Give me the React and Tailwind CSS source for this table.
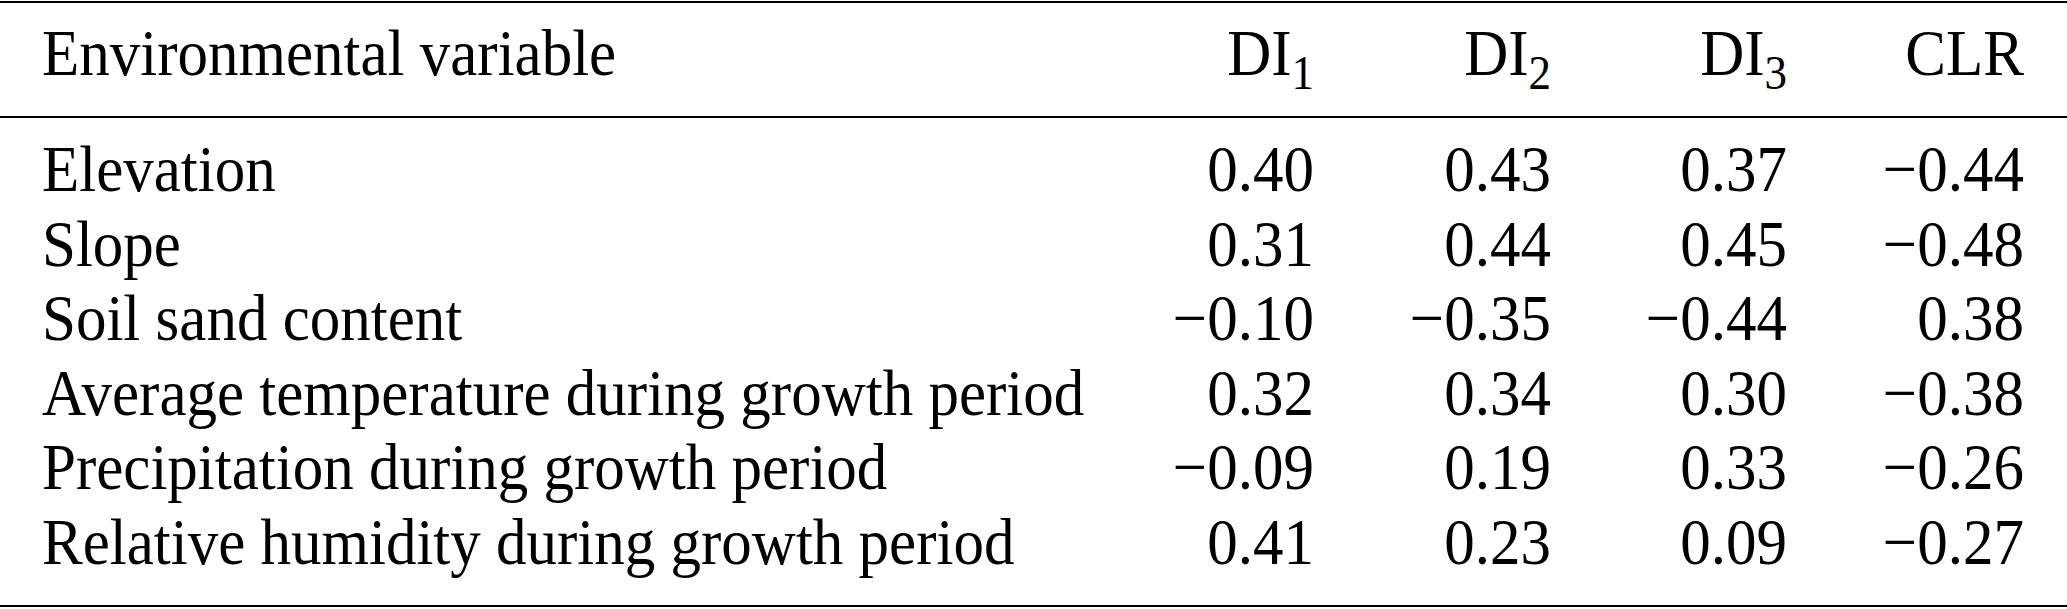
import React from "react";

const rows = [
  ["Elevation", "0.40", "0.43", "0.37", "−0.44"],
  ["Slope", "0.31", "0.44", "0.45", "−0.48"],
  ["Soil sand content", "−0.10", "−0.35", "−0.44", "0.38"],
  ["Average temperature during growth period", "0.32", "0.34", "0.30", "−0.38"],
  ["Precipitation during growth period", "−0.09", "0.19", "0.33", "−0.26"],
  ["Relative humidity during growth period", "0.41", "0.23", "0.09", "−0.27"],
];

function DI({ n }) {
  return (
    <span>
      DI
      <span className="relative top-[13px] text-[45px] leading-none">{n}</span>
    </span>
  );
}

export default function App() {
  return (
    <div className="w-[2067px] h-[609px] bg-white text-black overflow-hidden font-['Liberation_Serif','Times_New_Roman',serif] text-[61px] leading-[74.6px]">
      <div className="mt-[1px] border-y-2 border-black pt-[15px] pb-[23px]">
        <div className="grid grid-cols-[minmax(0,1fr)_237px_237px_236px_280px] scale-y-[1.07] origin-[50%_58px]">
          <div className="pl-[42px] whitespace-nowrap">Environmental variable</div>
          <div className="text-right">
            <DI n="1" />
          </div>
          <div className="text-right">
            <DI n="2" />
          </div>
          <div className="text-right">
            <DI n="3" />
          </div>
          <div className="text-right pr-[43px]">CLR</div>
        </div>
      </div>
      <div className="border-b-2 border-black pt-[16.5px] pb-[23px]">
        {rows.map((r) => (
          <div
            key={r[0]}
            className="grid grid-cols-[minmax(0,1fr)_237px_237px_236px_280px] scale-y-[1.07] origin-[50%_58px]"
          >
            <div className="pl-[42px] whitespace-nowrap">{r[0]}</div>
            <div className="text-right">{r[1]}</div>
            <div className="text-right">{r[2]}</div>
            <div className="text-right">{r[3]}</div>
            <div className="text-right pr-[43px]">{r[4]}</div>
          </div>
        ))}
      </div>
    </div>
  );
}
